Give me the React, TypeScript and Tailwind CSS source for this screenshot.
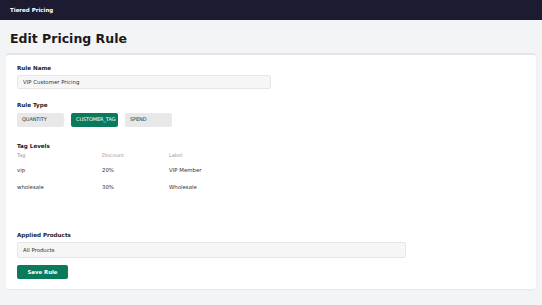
import React from 'react';

const levels = [
  { tag: 'vip', discount: '20%', label: 'VIP Member' },
  { tag: 'wholesale', discount: '30%', label: 'Wholesale' },
];

const ruleTypes = ['QUANTITY', 'CUSTOMER_TAG', 'SPEND'];

export default function App() {
  const selected = 'CUSTOMER_TAG';

  return (
    <div
      className="min-h-[305px] bg-[#f3f4f6] text-[#222]"
      style={{ fontFamily: '"DejaVu Sans", "Liberation Sans", sans-serif' }}
    >
      <header className="flex h-[20px] items-center bg-[#1c1b31] px-[10px]">
        <span className="text-[5.5px] font-bold text-white">Tiered Pricing</span>
      </header>

      <main className="px-[6px]">
        <h1 className="pl-[4px] pt-[9px] text-[12.5px] font-bold leading-[20px] text-[#1a1a1a]">
          Edit Pricing Rule
        </h1>

        <div className="mt-[4px] rounded-[3px] border-t-2 border-[#e3e4e7] bg-white px-[11px] pb-[10px] pt-[8px] shadow-[0_1px_2px_rgba(0,0,0,0.06)]">
          {/* Rule name */}
          <label className="block text-[5.6px] font-bold leading-[10px]">Rule Name</label>
          <div className="mt-[2px] flex h-[14px] w-[254px] items-center rounded-[2px] border border-[#e6e6e6] bg-[#f6f6f6] px-[5px] text-[5.4px] text-[#333]">
            VIP Customer Pricing
          </div>

          {/* Rule type */}
          <label className="mt-[11px] block text-[5.6px] font-bold leading-[10px]">Rule Type</label>
          <div className="mt-[3px] flex gap-[7px]">
            {ruleTypes.map((t) => (
              <div
                key={t}
                className={
                  t === selected
                    ? 'flex h-[14px] w-[47px] items-center overflow-hidden whitespace-nowrap rounded-[2px] bg-[#0b7a5b] px-[5px] text-[5px] tracking-[-0.1px] text-white'
                    : 'flex h-[14px] w-[47px] items-center overflow-hidden whitespace-nowrap rounded-[2px] bg-[#e8e8e8] px-[5px] text-[5px] tracking-[-0.1px] text-[#333]'
                }
              >
                {t}
              </div>
            ))}
          </div>

          {/* Tag levels */}
          <label className="mt-[14px] block text-[5.6px] font-bold leading-[10px]">Tag Levels</label>
          <div className="grid grid-cols-[85px_67px_1fr] text-[5.4px]">
            <div className="text-[5px] leading-[9px] text-[#999]">Tag</div>
            <div className="text-[5px] leading-[9px] text-[#999]">Discount</div>
            <div className="text-[5px] leading-[9px] text-[#999]">Label</div>
            {levels.map((l) => (
              <React.Fragment key={l.tag}>
                <div className="pt-[4px] leading-[13px] text-[#333]">{l.tag}</div>
                <div className="pt-[4px] leading-[13px] text-[#333]">{l.discount}</div>
                <div className="pt-[4px] leading-[13px] text-[#333]">{l.label}</div>
              </React.Fragment>
            ))}
          </div>

          {/* Applied products */}
          <label className="mt-[36px] block text-[5.6px] font-bold leading-[10px]">Applied Products</label>
          <div className="mt-[2px] flex h-[16px] w-[389px] items-center rounded-[2px] border border-[#e6e6e6] bg-[#f6f6f6] px-[5px] text-[5.4px] text-[#333]">
            All Products
          </div>

          <button className="mt-[7px] flex h-[14px] w-[51px] items-center justify-center rounded-[2px] bg-[#0b7a5b] text-[5.4px] font-bold text-white">
            Save Rule
          </button>
        </div>
      </main>
    </div>
  );
}
